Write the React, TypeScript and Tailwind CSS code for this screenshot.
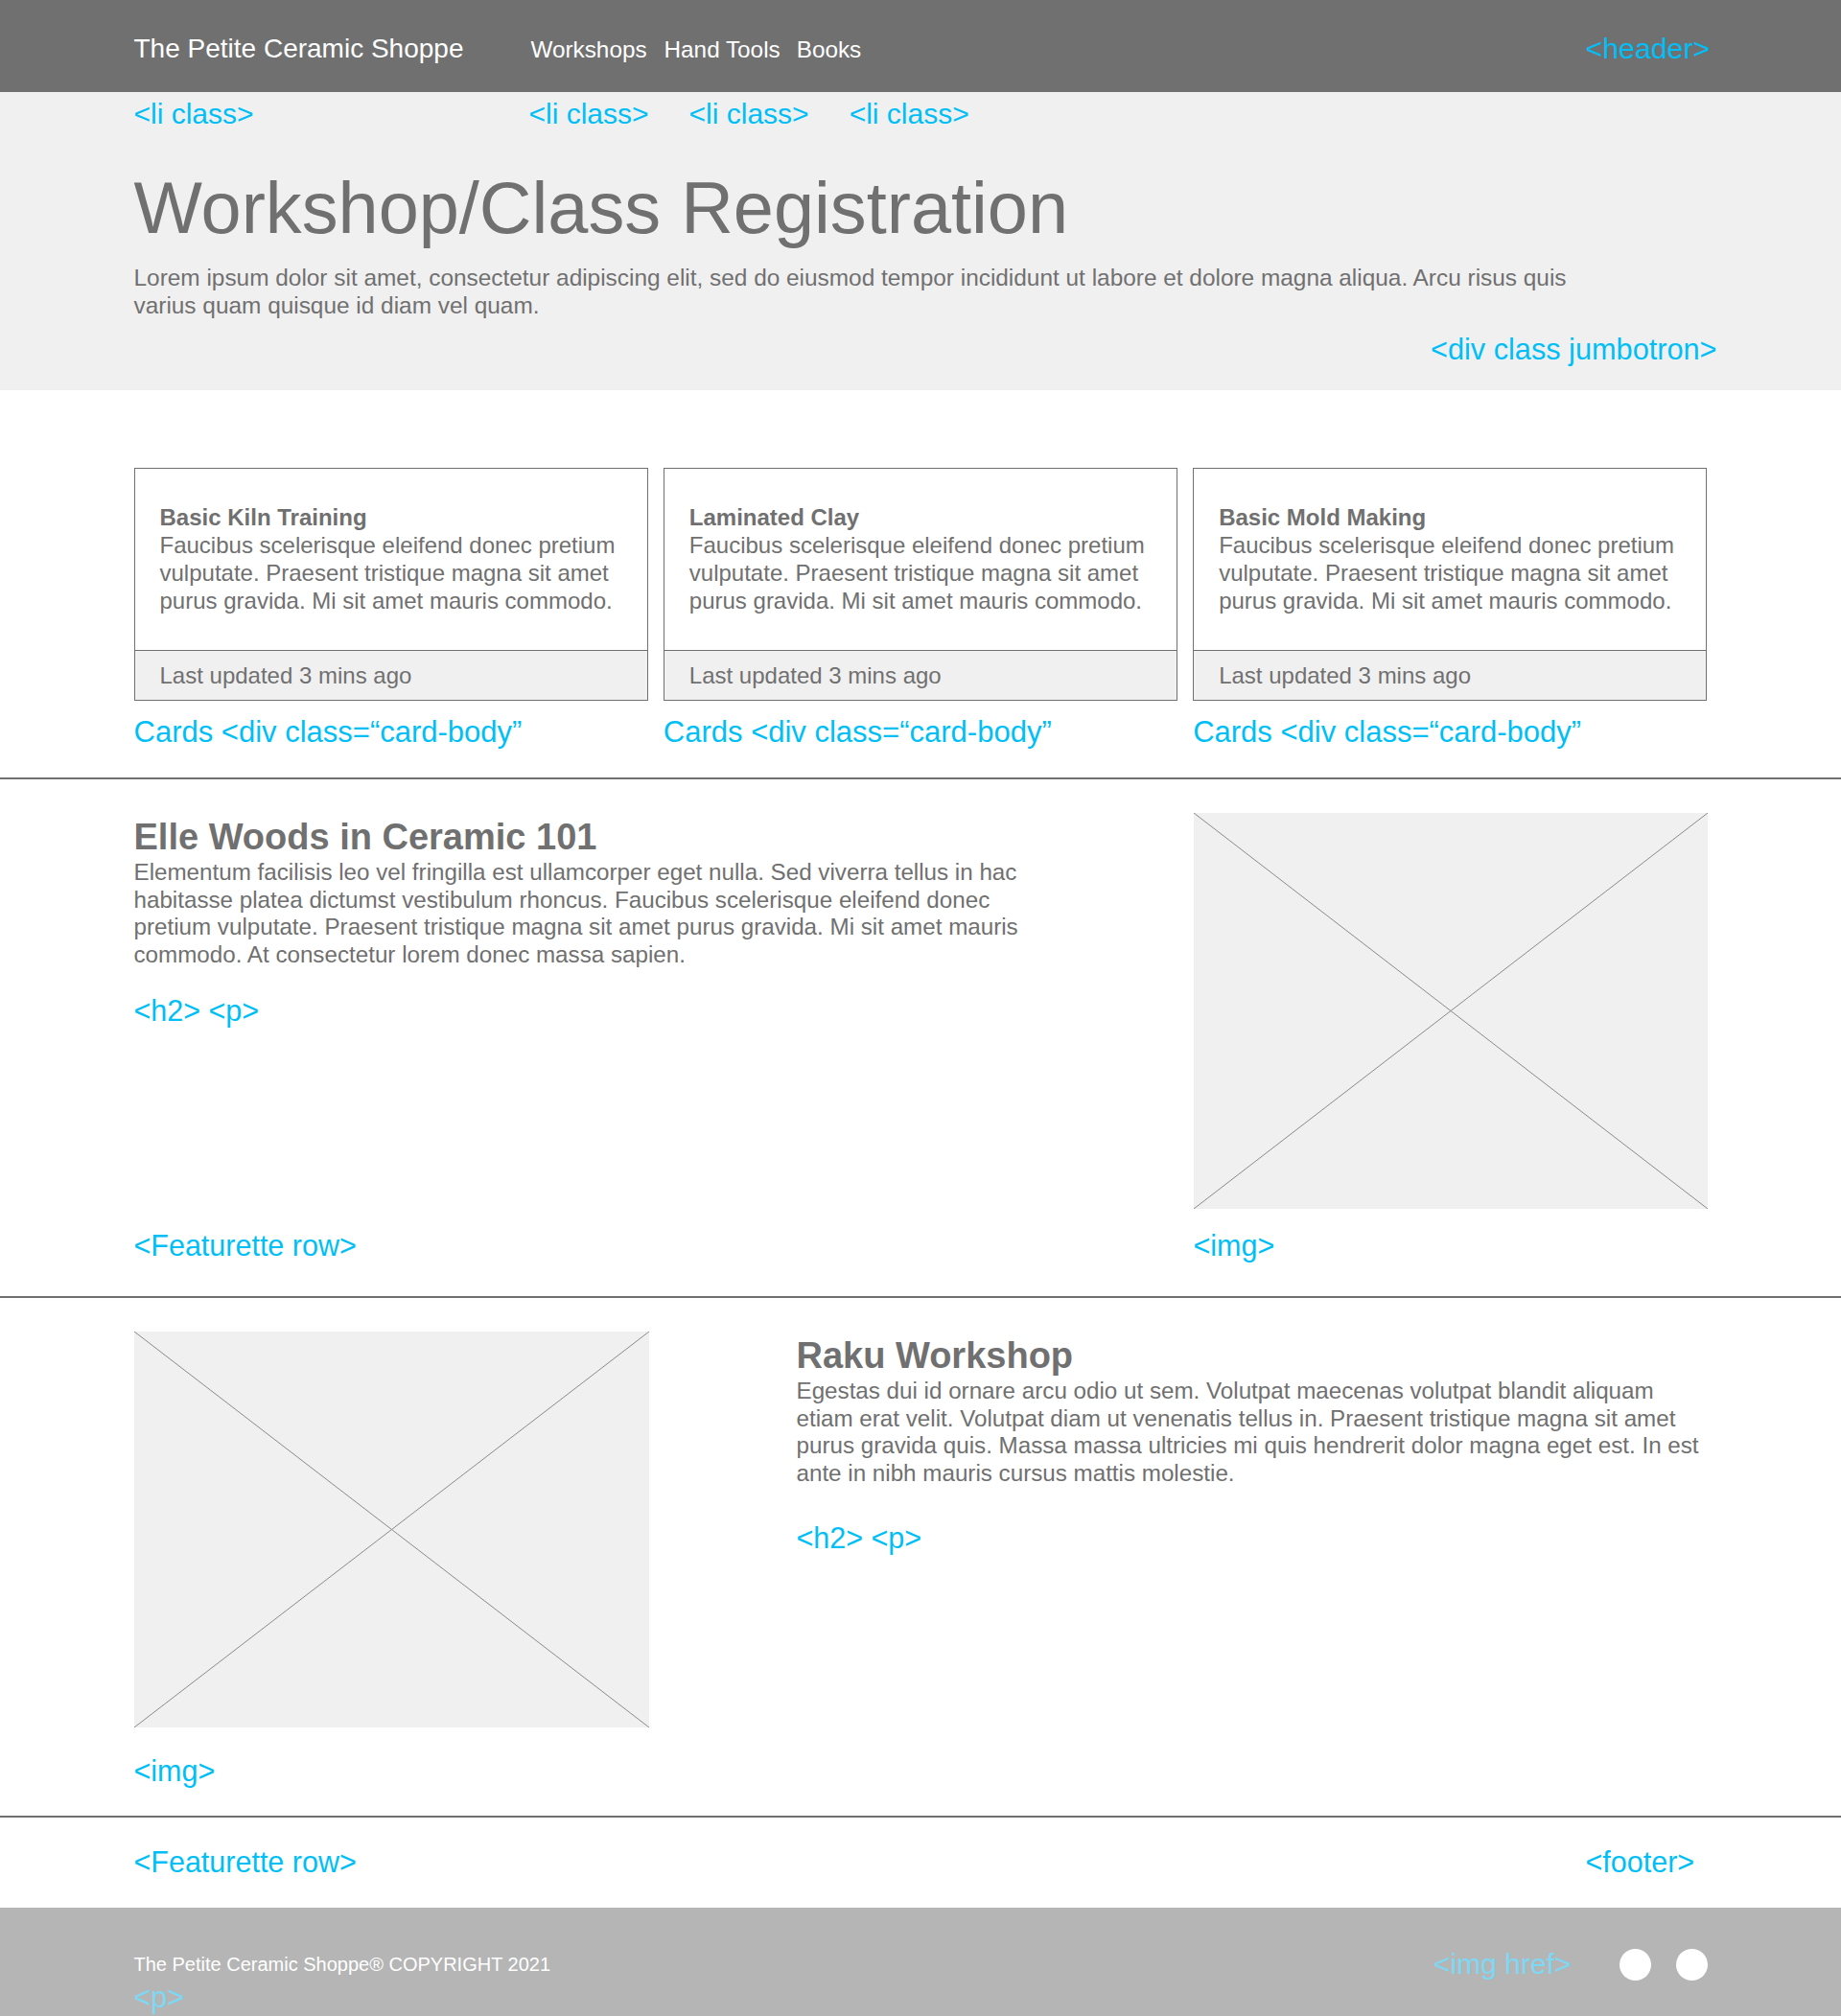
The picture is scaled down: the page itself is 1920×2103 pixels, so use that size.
import React from 'react';

const cards = [
  { title: 'Basic Kiln Training' },
  { title: 'Laminated Clay' },
  { title: 'Basic Mold Making' },
];

const cardText =
  'Faucibus scelerisque eleifend donec pretium vulputate. Praesent tristique magna sit amet purus gravida. Mi sit amet mauris commodo.';

function Placeholder() {
  return (
    <div className="h-[413px] w-full bg-[#f0f0f0]">
      <svg className="block h-full w-full" viewBox="0 0 100 100" preserveAspectRatio="none">
        <line x1="0" y1="0" x2="100" y2="100" stroke="#8a8a8a" strokeWidth="1" vectorEffect="non-scaling-stroke" />
        <line x1="100" y1="0" x2="0" y2="100" stroke="#8a8a8a" strokeWidth="1" vectorEffect="non-scaling-stroke" />
      </svg>
    </div>
  );
}

function Divider() {
  return <div className="h-[2px] bg-[#707070]" />;
}

export default function App() {
  return (
    <div className="flex min-h-[2103px] w-[1920px] flex-col bg-white font-['Liberation_Sans',Arial,sans-serif] text-[#707070]">
      {/* header */}
      <header className="bg-[#707070]">
        <div className="mx-auto flex h-[96px] w-[1641px] items-center">
          <div className="mt-[5px] text-[28px] leading-[32px] text-white">The Petite Ceramic Shoppe</div>
          <nav className="ml-[70px] mt-[8px] flex text-[24.3px] leading-[28px] text-white">
            <a>Workshops</a>
            <a className="ml-[18px]">Hand Tools</a>
            <a className="ml-[17px]">Books</a>
          </nav>
          <div className="ml-auto mt-[5px] w-[127px] text-[30.3px] leading-[34px] text-[#00bff7]">&lt;header&gt;</div>
        </div>
      </header>

      {/* jumbotron */}
      <section className="bg-[#f0f0f0]">
        <div className="mx-auto w-[1641px] pb-[25px] pt-[6px]">
          <div className="flex text-[30px] leading-[34px] text-[#00bff7]">
            <span className="w-[412px]">&lt;li class&gt;</span>
            <span>&lt;li class&gt;</span>
            <span className="ml-[42px]">&lt;li class&gt;</span>
            <span className="ml-[42px]">&lt;li class&gt;</span>
          </div>
          <h1 className="mt-[39px] text-[75.7px] font-normal leading-[84px]">Workshop/Class Registration</h1>
          <p className="mt-[16px] w-[1530px] text-[24.4px] leading-[29px]">
            Lorem ipsum dolor sit amet, consectetur adipiscing elit, sed do eiusmod tempor incididunt ut labore et
            dolore magna aliqua. Arcu risus quis varius quam quisque id diam vel quam.
          </p>
          <div className="-mr-[10px] mt-[15px] text-right text-[30.7px] leading-[34px] text-[#00bff7]">
            &lt;div class jumbotron&gt;
          </div>
        </div>
      </section>

      {/* cards */}
      <section className="mx-auto grid w-[1641px] grid-cols-3 gap-x-[16px] pb-[30px] pt-[81px]">
        {cards.map((c) => (
          <div key={c.title}>
            <div className="border border-[#707070]">
              <div className="px-[26px] pb-[37px] pt-[36px] text-[24px] leading-[29px]">
                <h5 className="font-bold">{c.title}</h5>
                <p>{cardText}</p>
              </div>
              <div className="border-t border-[#707070] bg-[#f0f0f0] px-[26px] pb-[11px] pt-[11px] text-[24px] leading-[29px]">
                Last updated 3 mins ago
              </div>
            </div>
            <div className="mt-[16px] text-[31px] leading-[34px] text-[#00bff7]">Cards &lt;div class=“card-body”</div>
          </div>
        ))}
      </section>

      <Divider />

      {/* featurette 1 */}
      <section className="mx-auto flex w-[1641px] pb-[36px] pt-[35px]">
        <div className="flex w-[955px] flex-col pt-[3px]">
          <h2 className="text-[38px] font-bold leading-[45px]">Elle Woods in Ceramic 101</h2>
          <p className="text-[24.2px] leading-[28.7px]">
            Elementum facilisis leo vel fringilla est ullamcorper eget nulla. Sed viverra tellus in hac habitasse platea
            dictumst vestibulum rhoncus. Faucibus scelerisque eleifend donec pretium vulputate. Praesent tristique magna
            sit amet purus gravida. Mi sit amet mauris commodo. At consectetur lorem donec massa sapien.
          </p>
          <div className="mt-[26px] text-[30.5px] leading-[34px] text-[#00bff7]">&lt;h2&gt; &lt;p&gt;</div>
          <div className="mt-auto text-[30.5px] leading-[34px] text-[#00bff7]">&lt;Featurette row&gt;</div>
        </div>
        <div className="ml-auto w-[536px]">
          <Placeholder />
          <div className="mt-[21px] text-[30.5px] leading-[34px] text-[#00bff7]">&lt;img&gt;</div>
        </div>
      </section>

      <Divider />

      {/* featurette 2 */}
      <section className="mx-auto flex w-[1641px] pb-[30px] pt-[35px]">
        <div className="w-[537px]">
          <Placeholder />
          <div className="mt-[28px] text-[30.5px] leading-[34px] text-[#00bff7]">&lt;img&gt;</div>
        </div>
        <div className="ml-auto w-[950px] pt-[3px]">
          <h2 className="text-[38px] font-bold leading-[44px]">Raku Workshop</h2>
          <p className="mt-[1px] text-[24.2px] leading-[28.7px]">
            Egestas dui id ornare arcu odio ut sem. Volutpat maecenas volutpat blandit aliquam etiam erat velit.
            Volutpat diam ut venenatis tellus in. Praesent tristique magna sit amet purus gravida quis. Massa massa
            ultricies mi quis hendrerit dolor magna eget est. In est ante in nibh mauris cursus mattis molestie.
          </p>
          <div className="mt-[35px] text-[30.5px] leading-[34px] text-[#00bff7]">&lt;h2&gt; &lt;p&gt;</div>
        </div>
      </section>

      <Divider />

      <div className="mx-auto flex w-[1641px] pb-[31px] pt-[29px] text-[30.5px] leading-[34px] text-[#00bff7]">
        <span>&lt;Featurette row&gt;</span>
        <span className="ml-auto w-[127px]">&lt;footer&gt;</span>
      </div>

      {/* footer */}
      <footer className="min-h-[112px] flex-1 bg-[#b5b5b5]">
        <div className="mx-auto flex w-[1641px] items-start pt-[42px]">
          <div className="pt-[6px]">
            <p className="text-[20px] leading-[23px] text-white">The Petite Ceramic Shoppe® COPYRIGHT 2021</p>
            <p className="mt-[5px] text-[30.5px] leading-[34px] text-[#7dd8f4]">&lt;p&gt;</p>
          </div>
          <div className="ml-auto flex h-[34px] items-center">
            <span className="text-[30px] leading-[34px] text-[#7dd8f4]">&lt;img href&gt;</span>
            <span className="ml-[50px] h-[33px] w-[33px] rounded-full bg-white" />
            <span className="ml-[26px] h-[33px] w-[33px] rounded-full bg-white" />
          </div>
        </div>
      </footer>
    </div>
  );
}
